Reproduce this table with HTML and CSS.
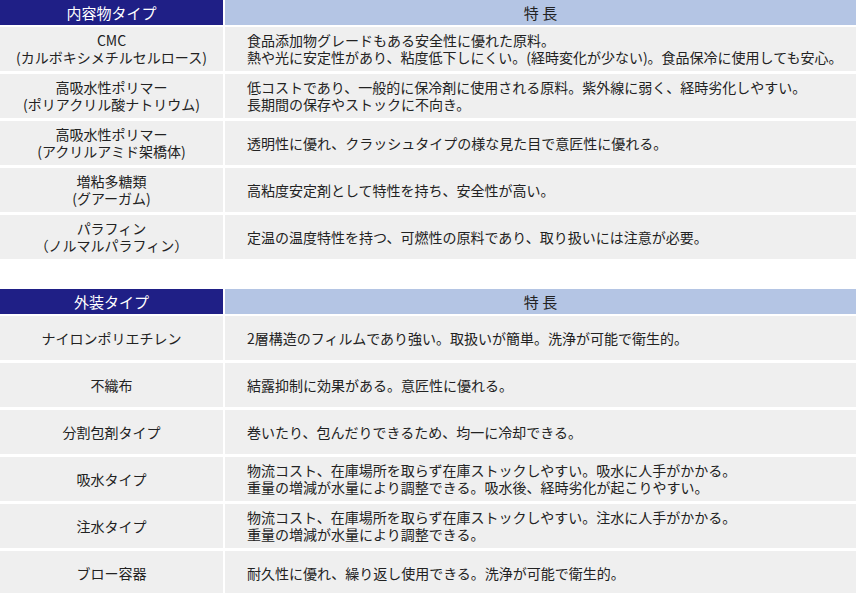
FILE: index.html
```html
<!DOCTYPE html>
<html lang="ja">
<head>
<meta charset="utf-8">
<link rel="stylesheet" href="styles.css">
</head>
<body>
<div class="page">
  <div class="tbl">
    <div class="th th-left">内容物タイプ</div>
    <div class="th th-right">特 長</div>

    <div class="cell name">CMC<br>(カルボキシメチルセルロース)</div>
    <div class="cell desc">食品添加物グレードもある安全性に優れた原料。<br>熱や光に安定性があり、粘度低下しにくい。(経時変化が少ない)。食品保冷に使用しても安心。</div>

    <div class="cell name">高吸水性ポリマー<br>(ポリアクリル酸ナトリウム)</div>
    <div class="cell desc">低コストであり、一般的に保冷剤に使用される原料。紫外線に弱く、経時劣化しやすい。<br>長期間の保存やストックに不向き。</div>

    <div class="cell name">高吸水性ポリマー<br>(アクリルアミド架橋体)</div>
    <div class="cell desc">透明性に優れ、クラッシュタイプの様な見た目で意匠性に優れる。</div>

    <div class="cell name">増粘多糖類<br>(グアーガム)</div>
    <div class="cell desc">高粘度安定剤として特性を持ち、安全性が高い。</div>

    <div class="cell name">パラフィン<br>（ノルマルパラフィン）</div>
    <div class="cell desc">定温の温度特性を持つ、可燃性の原料であり、取り扱いには注意が必要。</div>
  </div>

  <div class="tbl tbl-second">
    <div class="th th-left">外装タイプ</div>
    <div class="th th-right">特 長</div>

    <div class="cell name">ナイロンポリエチレン</div>
    <div class="cell desc">2層構造のフィルムであり強い。取扱いが簡単。洗浄が可能で衛生的。</div>

    <div class="cell name">不織布</div>
    <div class="cell desc">結露抑制に効果がある。意匠性に優れる。</div>

    <div class="cell name">分割包剤タイプ</div>
    <div class="cell desc">巻いたり、包んだりできるため、均一に冷却できる。</div>

    <div class="cell name">吸水タイプ</div>
    <div class="cell desc">物流コスト、在庫場所を取らず在庫ストックしやすい。吸水に人手がかかる。<br>重量の増減が水量により調整できる。吸水後、経時劣化が起こりやすい。</div>

    <div class="cell name">注水タイプ</div>
    <div class="cell desc">物流コスト、在庫場所を取らず在庫ストックしやすい。注水に人手がかかる。<br>重量の増減が水量により調整できる。</div>

    <div class="cell name">ブロー容器</div>
    <div class="cell desc">耐久性に優れ、繰り返し使用できる。洗浄が可能で衛生的。</div>
  </div>
</div>
</body>
</html>
```

FILE: styles.css
```css
html, body {
  margin: 0;
  padding: 0;
  background: #ffffff;
}

body {
  font-family: "Noto Sans CJK JP", "Noto Sans", sans-serif;
  color: #222222;
  font-size: 14px;
}

.page {
  width: 856px;
}

.tbl {
  display: grid;
  grid-template-columns: 223px 1fr;
  grid-template-rows: 24px;
  grid-auto-rows: 44px;
  column-gap: 2px;
  row-gap: 3px;
}

.tbl-second {
  margin-top: 30px;
}

.th {
  display: flex;
  align-items: center;
  justify-content: center;
  font-size: 15px;
  line-height: 18px;
  margin-bottom: -1px;
}

.th-left {
  background: #1f1f86;
  color: #ffffff;
}

.th-right {
  background: #b4c5e4;
  color: #222222;
}

.cell {
  background: #efefef;
  display: flex;
  flex-direction: column;
  justify-content: center;
  line-height: 17px;
  font-size: 14px;
}

.name {
  align-items: center;
  text-align: center;
}

.desc {
  padding-left: 22px;
  align-items: flex-start;
}
```
